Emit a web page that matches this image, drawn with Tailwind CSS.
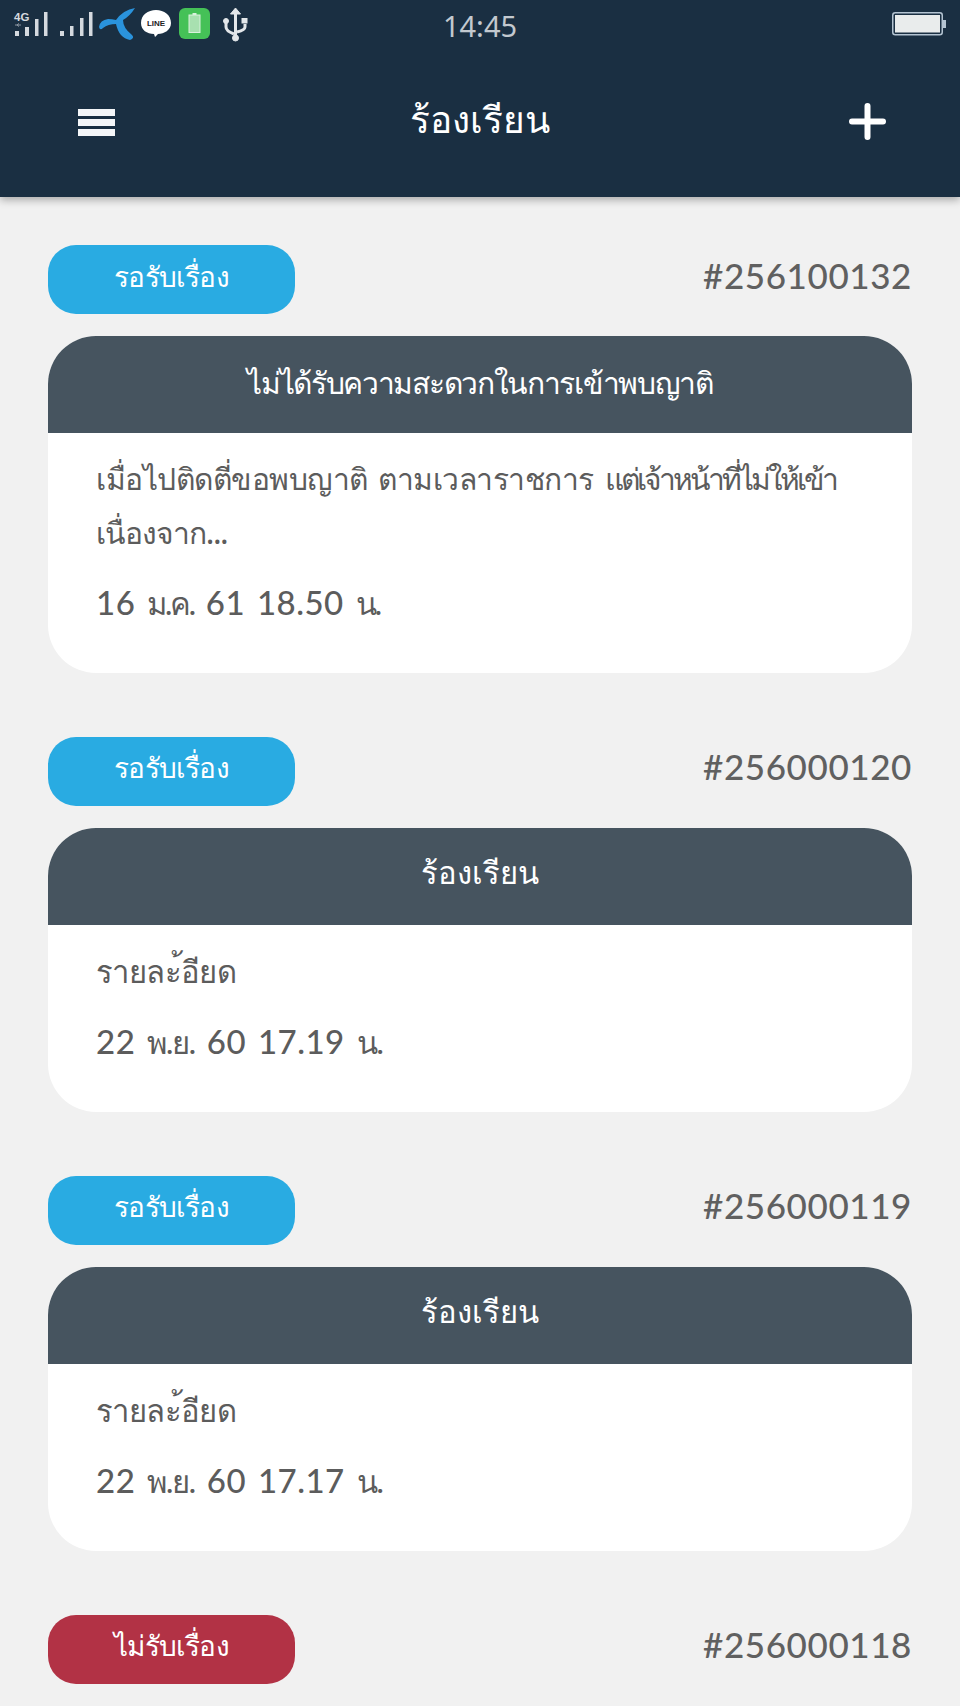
<!DOCTYPE html>
<html lang="th">
<head>
<meta charset="utf-8">
<script src="https://cdn.jsdelivr.net/npm/@tailwindcss/browser@4"></script>
</head>
<body class="m-0 bg-[#f1f1f1] font-['Noto_Sans','Open_Sans',sans-serif] overflow-hidden">
<div class="w-[960px] h-[1706px] overflow-hidden">
  <header class="h-[197px] bg-[#1a2f42] shadow-[0_3px_8px_rgba(0,0,0,0.3)] flex flex-col relative">
    <div class="h-[50px] relative flex items-center">
      <svg class="w-[260px] h-[50px] shrink-0" viewBox="0 0 260 50">
        <text x="14" y="21" font-size="11.5" font-weight="700" fill="#d5dadf" font-family="Liberation Sans">4G</text>
        <path d="M15 25h6m-2-1.500l-2 1.500 2 1.500" stroke="#8d98a3" stroke-width="1" fill="none"/>
        <g fill="#d5dadf">
          <rect x="15" y="31" width="4" height="5"/><rect x="25" y="27" width="4" height="9"/><rect x="35" y="19" width="3.500" height="17"/><rect x="44" y="12" width="3.500" height="24"/>
          <rect x="60" y="31" width="4" height="5"/><rect x="70" y="26" width="3.500" height="10"/><rect x="80" y="18" width="3.500" height="18"/><rect x="89" y="12" width="3.500" height="24"/>
        </g>
        <path d="M99 27 Q100 20 108 19 Q112 19 116 20 Q123 10 135 8 Q130 16 123 20 Q123 28 132 35 Q135 38 130 40 Q119 38 116 24 Q108 24 103 28 Q100 31 99 27 Z" fill="#2a93dc"/>
        <path d="M141 23 C141 15 148 10 156 10 C164 10 171 15 171 23 C171 30 164 34 158 34 L155 37 L154 34 C147 34 141 30 141 23 Z" fill="#fff"/>
        <text x="156" y="26" text-anchor="middle" font-size="8" font-weight="700" fill="#222" font-family="Liberation Sans">LINE</text>
        <rect x="179" y="8" width="31" height="31" rx="6" fill="#45c157"/>
        <rect x="189" y="15" width="11" height="17.500" fill="#a8e0b0" stroke="#d9f2dc"/>
        <rect x="192.500" y="13" width="4" height="2" fill="#d9f2dc"/>
        <g fill="#e3e7ea" stroke="#e3e7ea">
          <path d="M235.500 12 V38" stroke-width="3" fill="none"/>
          <path d="M235.500 8 l5 6 h-10 Z"/>
          <path d="M226 23 V27 Q226 31 234 34 M245 24 V27 Q245 30 237 32" fill="none" stroke-width="3"/>
          <circle cx="226" cy="21" r="2.500"/>
          <rect x="242" y="18.500" width="5" height="4.500"/>
          <circle cx="235.500" cy="38" r="3"/>
        </g>
      </svg>
      <span class="absolute left-0 right-0 text-center text-[29px] text-[#c3c9cf] leading-none">14:45</span>
      <svg class="absolute left-[892px] top-[12px] w-[56px] h-[24px]" viewBox="0 0 56 24">
        <rect x="0.750" y="0.750" width="49.500" height="22" rx="2.500" fill="#1a2f42" stroke="#b4c4d2" stroke-width="1.500"/>
        <rect x="3" y="3" width="45" height="17.500" fill="#e9ecec"/>
        <rect x="51" y="8" width="3" height="8" fill="#b4c4d2"/>
      </svg>
    </div>
    <div class="flex-1 relative flex items-center justify-center pb-[10px]">
      <svg class="absolute left-[78px] top-[59px] w-[37px] h-[28px]" viewBox="0 0 37 28" fill="#f4f6f8">
        <rect width="37" height="7"/><rect y="10" width="37" height="7"/><rect y="20" width="37" height="7"/>
      </svg>
      <h1 class="text-[37px] leading-none font-medium text-white">ร้องเรียน</h1>
      <svg class="absolute left-[849px] top-[53px] w-[37px] h-[37px]" viewBox="0 0 37 37" stroke="#fff" stroke-width="6" stroke-linecap="round">
        <path d="M18.500 3V34M3 18.500H34"/>
      </svg>
    </div>
  </header>
  <main class="px-[48px] pt-[48px] flex flex-col gap-[64px]">
    <section>
      <div class="flex items-center justify-between h-[69.300px]">
        <span class="w-[247px] h-full pb-[8px] rounded-[28px] bg-[#29abe2] flex items-center justify-center text-white text-[28px] tracking-[-0.800px] font-medium">รอรับเรื่อง</span>
        <span class="font-['Lato',sans-serif] text-[35px] leading-none text-[#606060] font-medium tracking-[0.600px] pb-[9px]">#256100132</span>
      </div>
      <article class="mt-[21.700px] rounded-[48px] bg-white overflow-hidden h-[336.700px]">
        <h2 class="h-[97px] pb-[4px] bg-[#46545f] text-white text-[30px] tracking-[-1.300px] font-medium flex items-center justify-center">ไม่ได้รับความสะดวกในการเข้าพบญาติ</h2>
        <div class="px-[48px] pt-[19px] text-[#5c5c5c]">
          <p class="text-[30px] leading-[54px] font-medium whitespace-nowrap [word-spacing:3px]"><span class="tracking-[-0.500px]">เมื่อไปติดตี่ขอพบญาติ</span> <span class="tracking-[-0.500px]">ตามเวลาราชการ</span> <span class="tracking-[-3px]">แต่เจ้าหน้าที่ไม่ให้เข้า</span><br><span class="tracking-[-1px]">เนื่องจาก...</span></p>
          <p class="font-['Lato',sans-serif] text-[33px] leading-[54px] mt-[15px] font-medium tracking-[0.500px] [word-spacing:3px]">16 <span class="text-[31px] tracking-[-2.200px]">ม.ค.</span> 61 18.50 <span class="text-[31px] tracking-[-1.800px]">น.</span></p>
        </div>
      </article>
    </section>
    <section>
      <div class="flex items-center justify-between h-[69.300px]">
        <span class="w-[247px] h-full pb-[8px] rounded-[28px] bg-[#29abe2] flex items-center justify-center text-white text-[28px] tracking-[-0.800px] font-medium">รอรับเรื่อง</span>
        <span class="font-['Lato',sans-serif] text-[35px] leading-none text-[#606060] font-medium tracking-[0.600px] pb-[9px]">#256000120</span>
      </div>
      <article class="mt-[21.700px] rounded-[48px] bg-white overflow-hidden h-[284px]">
        <h2 class="h-[97px] pb-[8px] bg-[#46545f] text-white text-[31px] font-medium flex items-center justify-center">ร้องเรียน</h2>
        <div class="px-[48px] pt-[19px] text-[#5c5c5c]">
          <p class="text-[31px] tracking-[-0.600px] leading-[54px] font-medium">รายละ้อียด</p>
          <p class="font-['Lato',sans-serif] text-[33px] leading-[54px] mt-[16px] font-medium tracking-[0.500px] [word-spacing:3px]">22 <span class="text-[31px] tracking-[-1.200px]">พ.ย.</span> 60 17.19 <span class="text-[31px] tracking-[-1.200px]">น.</span></p>
        </div>
      </article>
    </section>
    <section>
      <div class="flex items-center justify-between h-[69.300px]">
        <span class="w-[247px] h-full pb-[8px] rounded-[28px] bg-[#29abe2] flex items-center justify-center text-white text-[28px] tracking-[-0.800px] font-medium">รอรับเรื่อง</span>
        <span class="font-['Lato',sans-serif] text-[35px] leading-none text-[#606060] font-medium tracking-[0.600px] pb-[9px]">#256000119</span>
      </div>
      <article class="mt-[21.700px] rounded-[48px] bg-white overflow-hidden h-[284px]">
        <h2 class="h-[97px] pb-[8px] bg-[#46545f] text-white text-[31px] font-medium flex items-center justify-center">ร้องเรียน</h2>
        <div class="px-[48px] pt-[19px] text-[#5c5c5c]">
          <p class="text-[31px] tracking-[-0.600px] leading-[54px] font-medium">รายละ้อียด</p>
          <p class="font-['Lato',sans-serif] text-[33px] leading-[54px] mt-[16px] font-medium tracking-[0.500px] [word-spacing:3px]">22 <span class="text-[31px] tracking-[-1.200px]">พ.ย.</span> 60 17.17 <span class="text-[31px] tracking-[-1.200px]">น.</span></p>
        </div>
      </article>
    </section>
    <section>
      <div class="flex items-center justify-between h-[69.300px]">
        <span class="w-[247px] h-full pb-[8px] rounded-[28px] bg-[#b23245] flex items-center justify-center text-white text-[28px] tracking-[-0.800px] font-medium">ไม่รับเรื่อง</span>
        <span class="font-['Lato',sans-serif] text-[35px] leading-none text-[#606060] font-medium tracking-[0.600px] pb-[9px]">#256000118</span>
      </div>
    </section>
  </main>
</div>
</body>
</html>
